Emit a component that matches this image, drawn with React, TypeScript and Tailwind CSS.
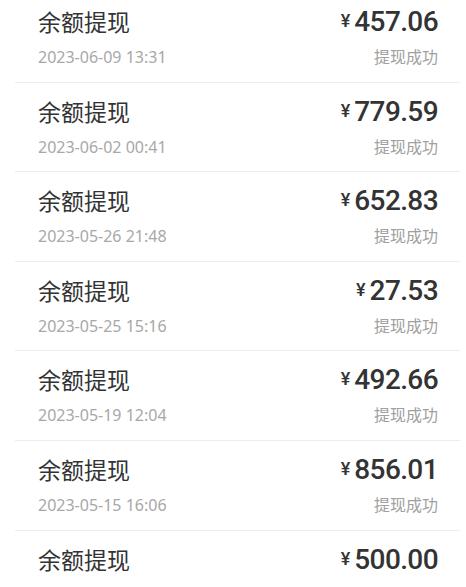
import React from "react";

const rows = [
  ["457.06", "2023-06-09 13:31"],
  ["779.59", "2023-06-02 00:41"],
  ["652.83", "2023-05-26 21:48"],
  ["27.53", "2023-05-25 15:16"],
  ["492.66", "2023-05-19 12:04"],
  ["856.01", "2023-05-15 16:06"],
  ["500.00", "2023-05-12 10:21"],
];

export default function App() {
  return (
    <div
      className="w-[466px] h-[587px] overflow-hidden bg-white"
      style={{ fontFamily: '"Noto Sans", "Noto Sans CJK SC", sans-serif' }}
    >
      <div className="mt-[-7px] ml-[15px] mr-[6px]">
        {rows.map(([amt, date], i) => (
          <div key={i} className="h-[89.6px] border-b border-[#ececec] pl-[23px] pr-[22px] pt-[12px]">
            <div className="flex items-start justify-between">
              <div className="text-[23px] leading-[34px] text-[#333]">余额提现</div>
              <div className="flex items-start text-[#333] font-['Roboto',sans-serif]">
                <span className="text-[18px] leading-[20px] mt-[6px] mr-[4px] font-medium">¥</span>
                <span className="text-[28px] leading-[34px] font-medium tracking-[-0.6px]">{amt}</span>
              </div>
            </div>
            <div className="flex items-center justify-between mt-[6px]">
              <div className="text-[16px] leading-[24px] text-[#a8a8a8]">{date}</div>
              <div className="text-[16px] leading-[24px] text-[#a0a0a0]">提现成功</div>
            </div>
          </div>
        ))}
      </div>
    </div>
  );
}
